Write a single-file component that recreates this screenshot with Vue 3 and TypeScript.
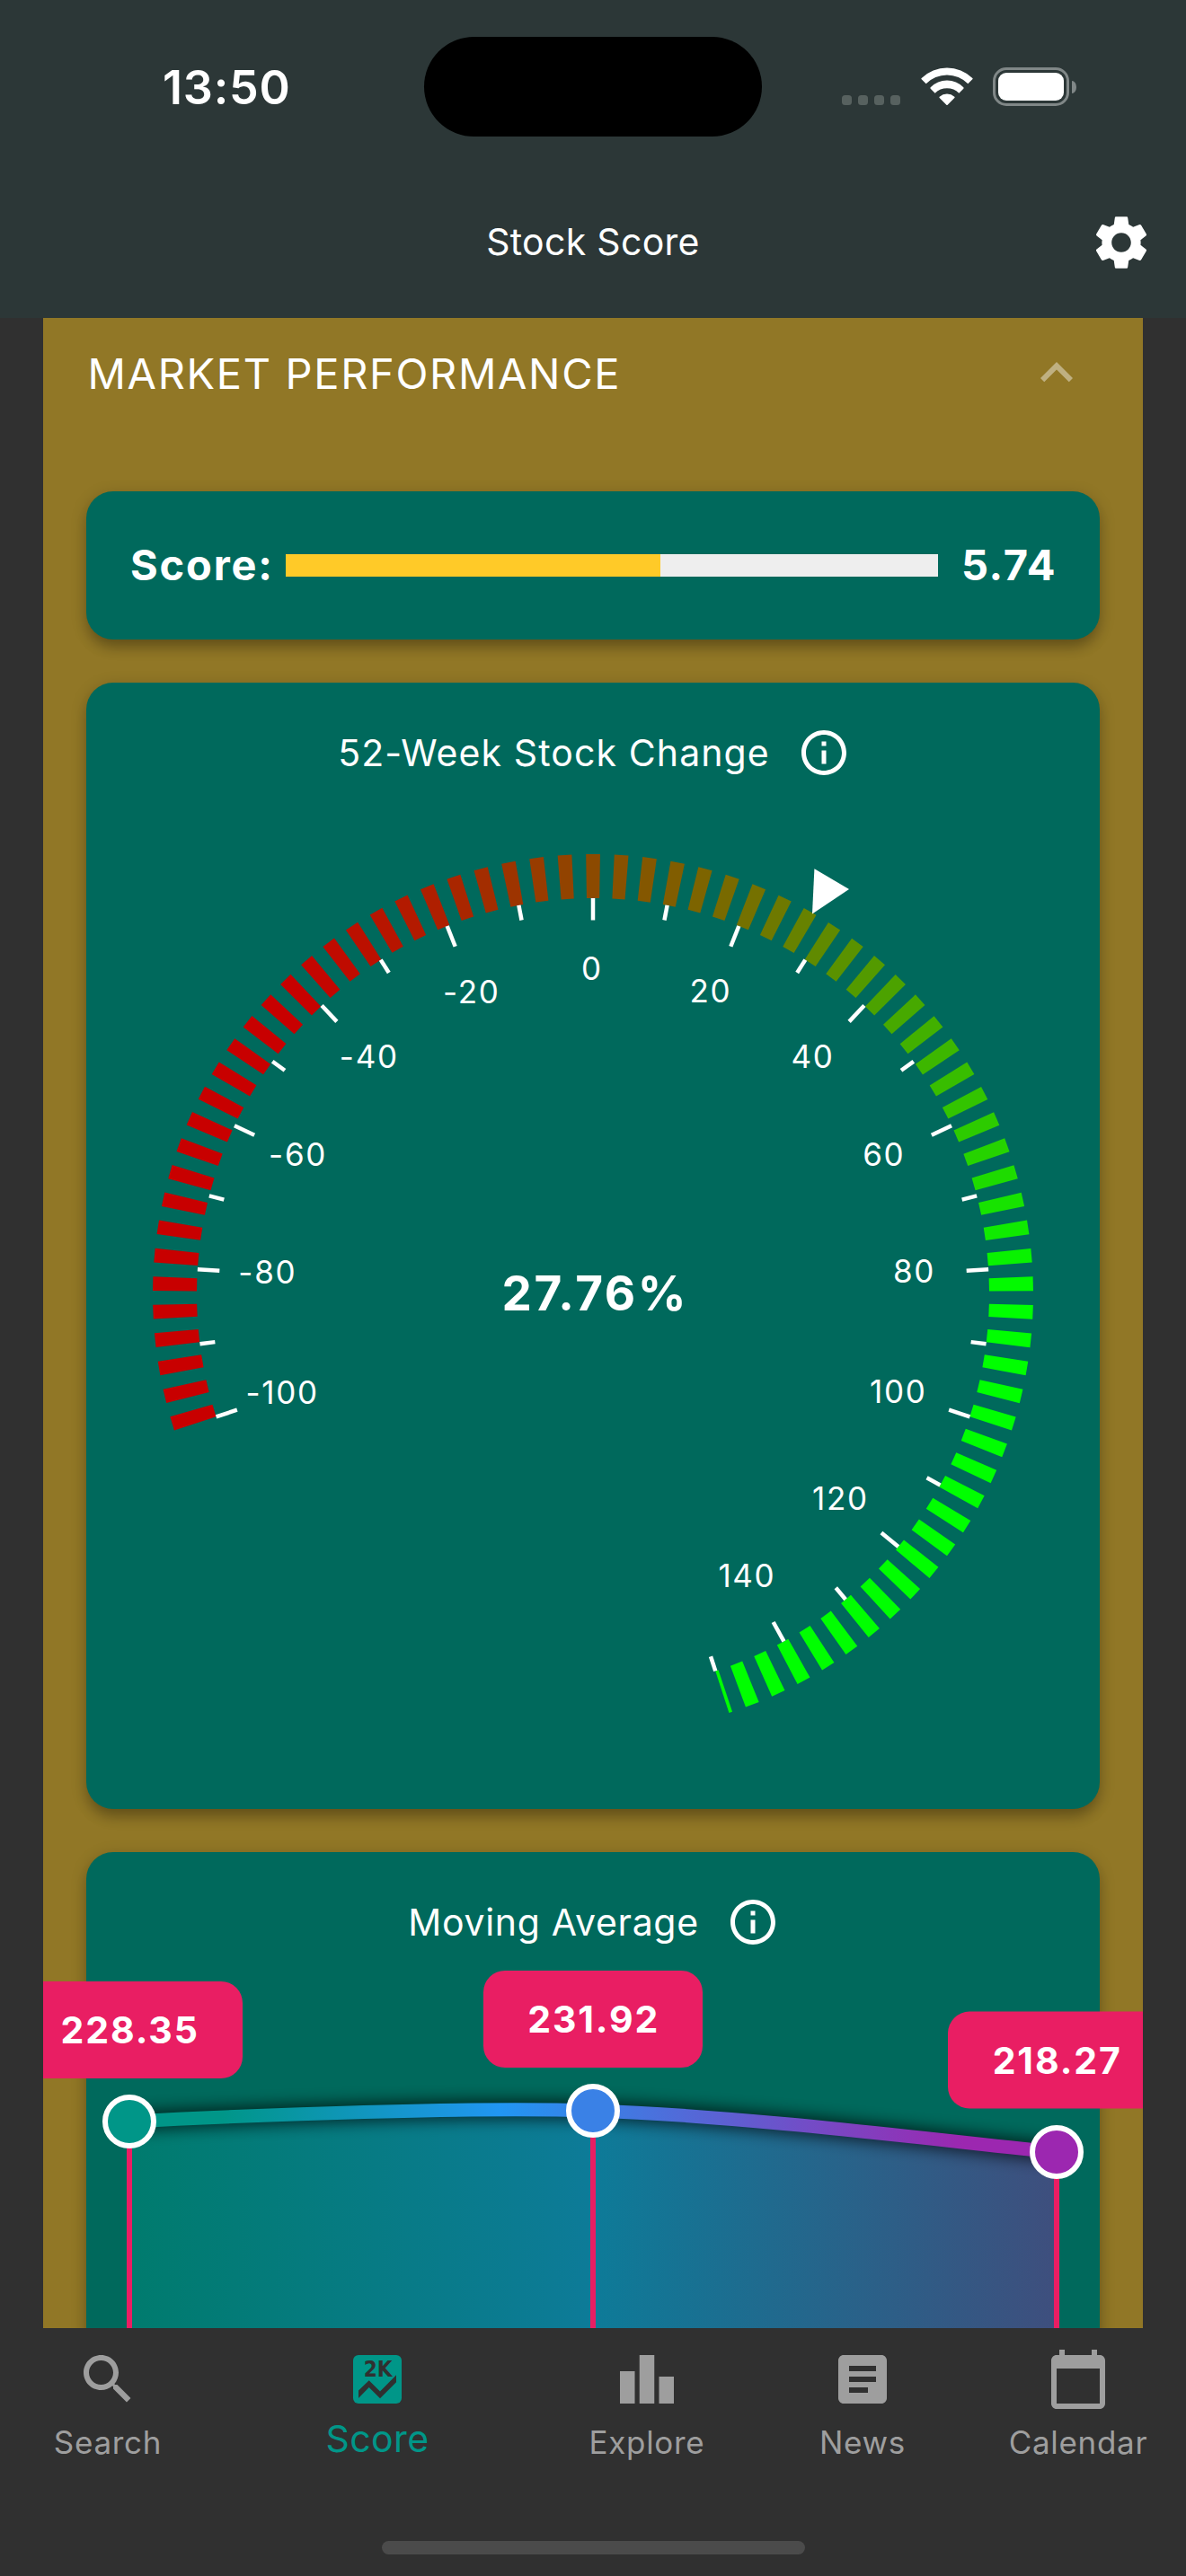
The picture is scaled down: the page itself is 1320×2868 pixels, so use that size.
<script setup lang="ts">
interface Rgb { r: number; g: number; b: number }
interface Stop { value: number; color: Rgb }

const CX = 660
const CY = 1441
const OUTER = 490
const BAND = 49
const MIN = -100
const MAX = 150
const SWEEP = 270

const stops: Stop[] = [
  { value: -42, color: { r: 200, g: 0, b: 0 } },
  { value: -20, color: { r: 174, g: 32, b: 0 } },
  { value: 0, color: { r: 140, g: 74, b: 0 } },
  { value: 20, color: { r: 118, g: 112, b: 0 } },
  { value: 40, color: { r: 78, g: 160, b: 0 } },
  { value: 60, color: { r: 48, g: 200, b: 0 } },
  { value: 80, color: { r: 6, g: 245, b: 0 } },
  { value: 84, color: { r: 0, g: 255, b: 0 } },
]

function colorAt(v: number): string {
  if (v <= stops[0].value) return 'rgb(200,0,0)'
  for (let i = 1; i < stops.length; i++) {
    const a = stops[i - 1]
    const b = stops[i]
    if (v <= b.value) {
      const t = (v - a.value) / (b.value - a.value)
      const mix = (p: number, q: number) => Math.round(p + (q - p) * t)
      return `rgb(${mix(a.color.r, b.color.r)},${mix(a.color.g, b.color.g)},${mix(a.color.b, b.color.b)})`
    }
  }
  return 'rgb(0,255,0)'
}

function polar(deg: number, r: number) {
  const a = (deg * Math.PI) / 180
  return { x: CX + r * Math.sin(a), y: CY - r * Math.cos(a) }
}

const angleOf = (v: number) => (v * SWEEP) / (MAX - MIN)

const midR = OUTER - BAND / 2
const dashDeg = (15 / midR) * (180 / Math.PI)
const startDeg = angleOf(MIN)
const endDeg = angleOf(MAX)

const dashes: { d: string; fill: string }[] = []
for (let a = startDeg; a < endDeg; a += dashDeg * 2) {
  const b = Math.min(a + dashDeg, endDeg)
  const p1 = polar(a, OUTER)
  const p2 = polar(b, OUTER)
  const p3 = polar(b, OUTER - BAND)
  const p4 = polar(a, OUTER - BAND)
  dashes.push({
    d: `M${p1.x} ${p1.y}L${p2.x} ${p2.y}L${p3.x} ${p3.y}L${p4.x} ${p4.y}Z`,
    fill: colorAt((((a + b) / 2) * (MAX - MIN)) / SWEEP),
  })
}

const ticks: { x1: number; y1: number; x2: number; y2: number }[] = []
for (let v = MIN; v <= MAX; v += 10) {
  const len = v % 20 === 0 ? 24.5 : 17
  const a = polar(angleOf(v), OUTER - BAND)
  const b = polar(angleOf(v), OUTER - BAND - len)
  ticks.push({ x1: a.x, y1: a.y, x2: b.x, y2: b.y })
}

const labels = [
  { t: '-100', x: 313.4, y: 1550 },
  { t: '-80', x: 297, y: 1416.6 },
  { t: '-60', x: 330.8, y: 1285.7 },
  { t: '-40', x: 410, y: 1176.5 },
  { t: '-20', x: 524, y: 1104.5 },
  { t: '0', x: 658, y: 1078.5 },
  { t: '20', x: 790, y: 1103.5 },
  { t: '40', x: 903.7, y: 1176.5 },
  { t: '60', x: 983, y: 1285.7 },
  { t: '80', x: 1016.8, y: 1415.5 },
  { t: '100', x: 999, y: 1549.5 },
  { t: '120', x: 934.7, y: 1668.6 },
  { t: '140', x: 830.6, y: 1754.5 },
]

const points = [
  { x: 144, y: 2362, fill: '#009688', text: '228.35', w: 252, top: 2206 },
  { x: 660, y: 2350, fill: '#3a81e6', text: '231.92', w: 244, top: 2194 },
  { x: 1176, y: 2396, fill: '#9c27b0', text: '218.27', w: 242, top: 2239.6 },
]
const curve = 'M144 2362C144 2362 479.4 2344 660 2350C840.6 2356 1085.7 2388 1176 2396'

const tabs = [
  { label: 'Search', icon: 'M15.5 14h-.79l-.28-.27C15.41 12.59 16 11.11 16 9.5 16 5.91 13.09 3 9.5 3S3 5.91 3 9.5 5.91 16 9.5 16c1.61 0 3.09-.59 4.23-1.57l.27.28v.79l5 4.99L20.49 19l-4.99-5zm-6 0C7.01 14 5 11.99 5 9.5S7.01 5 9.5 5 14 7.01 14 9.5 11.99 14 9.5 14z' },
  { label: 'Score', icon: '', active: true },
  { label: 'Explore', icon: 'M7.5 21H2V9h5.5v12zm7.25-18h-5.5v18h5.5V3zM22 11h-5.5v10H22V11z' },
  { label: 'News', icon: 'M19 3H5c-1.1 0-2 .9-2 2v14c0 1.1.9 2 2 2h14c1.1 0 2-.9 2-2V5c0-1.1-.9-2-2-2zm-5 14H7v-2h7v2zm3-4H7v-2h10v2zm0-4H7V7h10v2z' },
  { label: 'Calendar', icon: 'M20 3h-1V1h-2v2H7V1H5v2H4c-1.1 0-2 .9-2 2v16c0 1.1.9 2 2 2h16c1.1 0 2-.9 2-2V5c0-1.1-.9-2-2-2zm0 18H4V8h16v13z' },
]
const score = 5.74
const infoIcon = 'M11 7h2v2h-2zm0 4h2v6h-2zm1-9C6.48 2 2 6.48 2 12s4.48 10 10 10 10-4.48 10-10S17.52 2 12 2zm0 18c-4.41 0-8-3.59-8-8s3.59-8 8-8 8 3.59 8 8-3.59 8-8 8z'
</script>

<template>
  <div class="screen">
    <header class="top">
      <div class="status">
        <span class="time">13:50</span>
        <div class="island"></div>
        <div class="signal">
          <i v-for="n in 4" :key="n" class="dot"></i>
        </div>
        <svg class="wifi" viewBox="314 75 174 127" width="58" height="42.3" fill="#fff">
          <path d="M316 111A122 122 0 0 1 486 111Q488 113 486 115L471 130A98 98 0 0 0 331 130L316 115Q314 113 316 111Z" />
          <path d="M346 142A77 77 0 0 1 456 142Q458 144 456 146L441 161A57 57 0 0 0 361 161L346 146Q344 144 346 142Z" />
          <path d="M376 173A38 38 0 0 1 426 173Q428 175 426 177L403 200Q401 202 399 200L376 177Q374 175 376 173Z" />
        </svg>
        <div class="battery"><div class="charge"></div></div>
        <div class="nub"></div>
      </div>
      <div class="bar">
        <span class="bar-side"></span>
        <h1 class="bar-title">Stock Score</h1>
        <span class="bar-side right">
          <svg viewBox="0 0 24 24" width="72" height="72" fill="#fff">
            <path d="M19.14 12.94c.04-.3.06-.61.06-.94 0-.32-.02-.64-.07-.94l2.03-1.58c.18-.14.23-.41.12-.61l-1.92-3.32c-.12-.22-.37-.29-.59-.22l-2.39.96c-.5-.38-1.03-.7-1.62-.94L14.4 2.81c-.04-.24-.24-.41-.48-.41h-3.84c-.24 0-.43.17-.47.41L9.25 5.35C8.66 5.59 8.12 5.92 7.63 6.29L5.24 5.33c-.22-.08-.47 0-.59.22L2.74 8.87c-.12.21-.08.47.12.61l2.03 1.58c-.05.3-.09.63-.09.94s.02.64.07.94l-2.03 1.58c-.18.14-.23.41-.12.61l1.92 3.32c.12.22.37.29.59.22l2.39-.96c.5.38 1.03.7 1.62.94l.36 2.54c.05.24.24.41.48.41h3.84c.24 0 .44-.17.47-.41l.36-2.54c.59-.24 1.13-.56 1.62-.94l2.39.96c.22.08.47 0 .59-.22l1.92-3.32c.12-.22.07-.47-.12-.61l-2.01-1.58zM12 15.6c-1.98 0-3.6-1.62-3.6-3.6s1.62-3.6 3.6-3.6 3.6 1.62 3.6 3.6-1.62 3.6-3.6 3.6z" />
          </svg>
        </span>
      </div>
    </header>

    <main class="viewport">
      <section class="panel">
        <div class="panel-head">
          <h2 class="panel-title">MARKET PERFORMANCE</h2>
          <svg viewBox="0 0 24 24" width="72" height="72" fill="#fff" fill-opacity=".42">
            <path d="M12 7.7l-6 6 1.41 1.41L12 10.53l4.59 4.58L18 13.7z" />
          </svg>
        </div>

        <article class="card score">
          <span class="score-label">Score:</span>
          <div class="track"><div class="fill" :style="{ width: score * 10 + '%' }"></div></div>
          <span class="score-value">{{ score }}</span>
        </article>

        <article class="card gauge">
          <div class="card-head">
            <h3 class="card-title week">52-Week Stock Change</h3>
            <svg viewBox="0 0 24 24" width="60" height="60" fill="#fff"><path :d="infoIcon" /></svg>
          </div>
          <svg class="dial" viewBox="96 868 1128 1146" width="1128" height="1146">
            <path v-for="(s, i) in dashes" :key="'s' + i" :d="s.d" :fill="s.fill" />
            <line v-for="(t, i) in ticks" :key="'t' + i" v-bind="t" stroke="#fff" stroke-width="4.5" />
            <path d="M906.4 967.3L945 990L904 1017.5Z" fill="#fff" />
            <text v-for="l in labels" :key="l.t" class="tick-label" :x="l.x + 0.8" :y="l.y + 12.7">{{ l.t }}</text>
            <text class="reading" x="662.3" y="1459">27.76%</text>
          </svg>
        </article>

        <article class="card average">
          <div class="card-head">
            <h3 class="card-title moving">Moving Average</h3>
            <svg viewBox="0 0 24 24" width="60" height="60" fill="#fff"><path :d="infoIcon" /></svg>
          </div>
          <svg class="chart" viewBox="96 2170 1128 500" width="1128" height="500">
            <defs>
              <linearGradient id="line" gradientUnits="userSpaceOnUse" x1="144" y1="0" x2="1176" y2="0">
                <stop offset=".1" stop-color="#009688" />
                <stop offset=".4" stop-color="#2196f3" />
                <stop offset=".9" stop-color="#9c27b0" />
              </linearGradient>
              <linearGradient id="area" gradientUnits="userSpaceOnUse" x1="144" y1="0" x2="1176" y2="0">
                <stop offset="0" stop-color="#009688" />
                <stop offset=".5" stop-color="#2196f3" />
                <stop offset="1" stop-color="#9c27b0" />
              </linearGradient>
              <filter id="soft" filterUnits="userSpaceOnUse" x="90" y="2280" width="1140" height="200">
                <feGaussianBlur stdDeviation="9.5" />
              </filter>
            </defs>
            <path :d="curve + 'V2680H144Z'" fill="url(#area)" fill-opacity=".4" />
            <path :d="curve" fill="none" stroke="#000" stroke-opacity=".95" stroke-width="15" filter="url(#soft)" />
            <path :d="curve" fill="none" stroke="url(#line)" stroke-width="15" />
            <g v-for="p in points" :key="p.text">
              <path :d="`M${p.x} ${p.y}V2680`" stroke="#e91e63" stroke-width="6" />
              <circle :cx="p.x" :cy="p.y" r="27" :fill="p.fill" stroke="#fff" stroke-width="6" />
              <rect :x="p.x - p.w / 2" :y="p.top" :width="p.w" height="108" rx="24" fill="#e91e63" />
              <text class="tip" :x="p.x + 0.7" :y="p.top + 69">{{ p.text }}</text>
            </g>
          </svg>
        </article>
      </section>
    </main>

    <nav class="tabs">
      <a v-for="tab in tabs" :key="tab.label" class="tab" :class="{ active: tab.active }">
        <svg viewBox="0 0 24 24" width="72" height="72" fill="currentColor">
          <template v-if="tab.active">
            <rect x="3" y="3" width="18" height="18" rx="2" />
            <path d="M5 16.2L8.9 12.4L13 16.5L19 10.4V13.1L13 19.1L8.9 15L5 19Z" fill="#303030" />
            <text x="6.9" y="11" class="badge" textLength="10.6" lengthAdjust="spacingAndGlyphs">2K</text>
          </template>
          <path v-else :d="tab.icon" />
        </svg>
        <span class="tab-label">{{ tab.label }}</span>
      </a>
      <div class="home"></div>
    </nav>
  </div>
</template>

<style>
html, body { margin: 0; background: #303030; }
</style>

<style scoped>
.screen {
  width: 1320px;
  height: 2868px;
  display: flex;
  flex-direction: column;
  overflow: hidden;
  background: #303030;
  color: #fff;
  font-family: Inter, "Liberation Sans", sans-serif;
  font-weight: 400;
}
h1, h2, h3 { margin: 0; font-weight: 400; }
svg { display: block; flex: none; }
.top { height: 354px; flex: none; background: #2c3737; }
.status { height: 186px; display: flex; align-items: flex-start; }
.time {
  width: 291px;
  margin: 65px 0 0 181px;
  font-size: 52px;
  line-height: 66px;
  font-weight: 600;
  letter-spacing: .8px;
}
.island { width: 376px; height: 111px; margin-top: 41px; border-radius: 56px; background: #000; }
.signal { display: flex; gap: 7px; margin: 106px 0 0 89px; }
.dot { width: 11px; height: 11px; border-radius: 3.5px; background: #57615f; }
.wifi { margin: 75px 0 0 22.5px; }
.battery {
  box-sizing: border-box;
  width: 85px;
  height: 43px;
  margin: 75px 0 0 22.5px;
  padding: 3.3px;
  border: 3.7px solid #808787;
  border-radius: 15px;
}
.charge { height: 100%; border-radius: 9px; background: #fff; }
.nub { width: 5px; height: 14px; margin: 89.5px 0 0 3px; border-radius: 0 5px 5px 0 / 0 7px 7px 0; background: #808787; }
.bar { height: 168px; display: flex; align-items: center; }
.bar-side { width: 108px; flex: none; }
.bar-title { flex: 1; padding-bottom: 2px; text-align: center; font-size: 41px; letter-spacing: .3px; }
.viewport { height: 2238px; flex: none; overflow: hidden; padding: 0 48px; }
.panel { height: 100%; overflow: hidden; padding: 0 48px; background: #917726; }
.panel-head {
  height: 124px;
  margin-bottom: 69px;
  padding: 0 12px 0 1.5px;
  display: flex;
  align-items: center;
  justify-content: space-between;
}
.panel-title { padding-bottom: 2px; font-size: 47px; letter-spacing: 1.65px; }
.card {
  border-radius: 30px;
  background: #00695c;
  box-shadow: 0 12px 15px -3px rgba(0, 0, 0, .2), 0 4px 18px rgba(0, 0, 0, .2);
  margin-bottom: 48px;
}
.score {
  box-sizing: border-box;
  height: 165px;
  padding: 0 48px;
  display: flex;
  align-items: center;
  font-size: 47px;
  font-weight: 700;
}
.score-label { box-sizing: border-box; flex: none; padding: 0 0 3px 1px; letter-spacing: 1.8px; width: 174px; }
.score-value { flex: none; padding-bottom: 3px; letter-spacing: 1.6px; }
.track { flex: none; width: 726px; height: 24.6px; background: #eee; margin-right: 26px; }
.fill { height: 100%; background: #ffca28; }
.gauge { height: 1254px; }
.average { height: 900px; }
.card-head { padding-top: 48px; height: 60px; display: flex; align-items: center; justify-content: center; gap: 30px; }
.card-title { font-size: 41px; letter-spacing: 1.1px; }
.week { margin-left: 3px; }
.moving { letter-spacing: .7px; margin-left: 2px; }
.chart { overflow: visible; }
.tick-label { font-size: 35px; letter-spacing: 1.7px; fill: #fff; text-anchor: middle; }
.reading { font-size: 53px; font-weight: 700; letter-spacing: 2.6px; fill: #fff; text-anchor: middle; }
.tip { font-size: 41px; font-weight: 700; letter-spacing: 1.9px; fill: #fff; text-anchor: middle; }
.tabs { height: 276px; display: grid; grid-template-columns: 240px 360px 240px 240px 240px; grid-template-rows: 237px 15px; }
.tab { display: flex; flex-direction: column; align-items: center; padding-top: 21px; color: #9e9e9e; }
.tab.active { color: #009688; }
.tab-label { margin-top: 8px; line-height: 52px; font-size: 35px; letter-spacing: .7px; }
.active .tab-label { margin-top: 4px; font-size: 41px; letter-spacing: .4px; }
.badge { font: bold 8.3px "DejaVu Sans Condensed", "DejaVu Sans", sans-serif; fill: #303030; }
.home { grid-column: 1 / -1; justify-self: center; width: 471px; height: 15px; border-radius: 8px; background: #4b4b4b; }
</style>
